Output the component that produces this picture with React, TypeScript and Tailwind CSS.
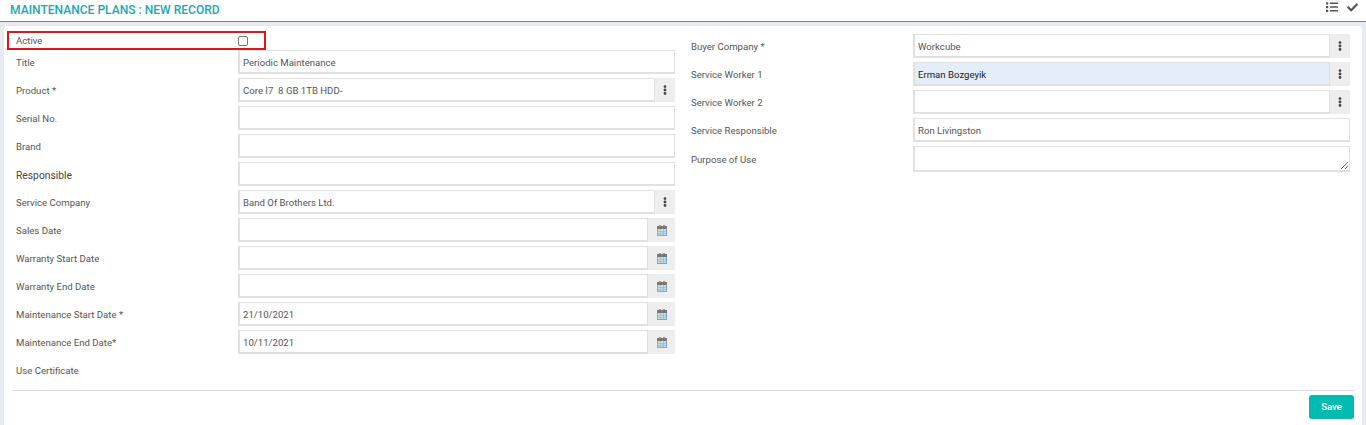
import { FaCheck, FaEllipsisV, FaList } from 'react-icons/fa'

type Addon = 'menu' | 'date' | undefined

interface FieldProps {
  label: string
  value?: string
  addon?: Addon
  highlight?: boolean
  labelClass?: string
}

function CalendarIcon() {
  return (
    <svg width="10" height="11" viewBox="0 0 10 11">
      <rect x="2" y="0" width="2" height="2" fill="#9a9a9a" />
      <rect x="6" y="0" width="2" height="2" fill="#9a9a9a" />
      <rect x="0" y="1" width="10" height="3" fill="#7d7672" />
      <rect x="0" y="4" width="10" height="7" fill="#c5e0e4" />
      <path d="M0 6.5h10M0 8.5h10M3.5 4v7M6.5 4v7" stroke="#a3b4ba" strokeWidth="0.7" />
      <rect x="0" y="4" width="1" height="7" fill="#b3a294" />
      <rect x="9" y="4" width="1" height="7" fill="#6aa9d6" />
      <rect x="0" y="10" width="10" height="1" fill="#9aa1a8" />
    </svg>
  )
}

function Field({ label, value = '', addon, highlight, labelClass }: FieldProps) {
  return (
    <div className="flex h-[28px] items-center">
      <label className={`w-[226px] shrink-0 pl-1 pt-[2px] ${labelClass ?? 'text-[9.6px] text-[#555]'}`}>{label}</label>
      <div className="flex h-[24px] flex-1">
        <div
          className={`flex min-w-0 flex-1 items-center whitespace-pre border-b-2 border-l-2 border-r border-t border-[#e0e0e0] px-[3px] pt-[3px] text-[9.6px] ${
            highlight ? 'bg-[#e3eefa] text-[#222]' : 'bg-white text-[#555]'
          }`}
        >
          {value}
        </div>
        {addon === 'menu' && (
          <div className="flex w-[20px] items-center justify-center bg-[#eeeeee] text-[#444]">
            <FaEllipsisV size={10} />
          </div>
        )}
        {addon === 'date' && (
          <div className="flex w-[27px] items-center justify-center bg-[#eeeeee]">
            <CalendarIcon />
          </div>
        )}
      </div>
    </div>
  )
}

export default function App() {
  return (
    <div className="h-[425px] overflow-hidden bg-[#e9ebf2] font-['Roboto',sans-serif]">
      {/* Header */}
      <div className="flex h-[22px] items-center justify-between border-b border-[#2aa89c] bg-white pl-[10px] pr-[8px]">
        <h1 className="text-[12.06px] font-medium text-[#17a9b5]">MAINTENANCE PLANS : NEW RECORD</h1>
        <div className="-mt-[7px] flex items-center gap-[9px] text-[#555]">
          <FaList size={12} />
          <FaCheck size={11} />
        </div>
      </div>

      {/* Card */}
      <div className="mx-[4px] mt-[4px] h-[399px] rounded-t-[3px] bg-white pl-[8px] pr-[8px]">
        <div className="flex gap-[16px] pr-[4px]">
          <div className="w-[663px]">
            <div className="-ml-[5px] mb-[-2px] mt-[5px] flex h-[19px] w-[259px] items-center border-2 border-[#e0141e]">
              <span className="w-[229px] shrink-0 pl-[7px] pt-[2px] text-[9.6px] text-[#555]">Active</span>
              <input type="checkbox" className="h-[10px] w-[10px] appearance-none rounded-[2px] border border-[#767676] bg-white" />
            </div>
            <Field label="Title" value="Periodic Maintenance" />
            <Field label="Product *" value="Core İ7  8 GB 1TB HDD-" addon="menu" />
            <Field label="Serial No." />
            <Field label="Brand" />
            <Field label="Responsible" labelClass="mt-[2px] text-[10.3px] text-[#444]" />
            <Field label="Service Company" value="Band Of Brothers Ltd." addon="menu" />
            <Field label="Sales Date" addon="date" />
            <Field label="Warranty Start Date" addon="date" />
            <Field label="Warranty End Date" addon="date" />
            <Field label="Maintenance Start Date *" value="21/10/2021" addon="date" />
            <Field label="Maintenance End Date*" value="10/11/2021" addon="date" />
            <div className="flex h-[28px] items-center pl-1 pt-[2px] text-[9.6px] text-[#555]">Use Certificate</div>
          </div>

          <div className="mt-[6px] flex-1">
            <Field label="Buyer Company *" value="Workcube" addon="menu" labelClass="-ml-1 text-[9.6px] text-[#555]" />
            <Field label="Service Worker 1" value="Erman Bozgeyik" addon="menu" highlight labelClass="-ml-1 text-[9.6px] text-[#555]" />
            <Field label="Service Worker 2" addon="menu" labelClass="-ml-1 text-[9.6px] text-[#555]" />
            <Field label="Service Responsible" value="Ron Livingston" labelClass="-ml-1 text-[9.6px] text-[#555]" />
            <div className="mt-[2px] flex">
              <label className="mt-[7px] w-[222px] shrink-0 text-[9.6px] text-[#555]">Purpose of Use</label>
              <textarea className="h-[26px] flex-1 border-b-2 border-l-2 border-r border-t border-[#e0e0e0] outline-none" />
            </div>
          </div>
        </div>

        {/* Footer */}
        <div className="mt-[6px] flex justify-end border-t border-[#dddddd] pt-[4px]">
          <button className="h-[24px] w-[45px] rounded-[3px] bg-[#00bcb0] pt-[1px] text-[9.6px] font-medium text-white">Save</button>
        </div>
      </div>
    </div>
  )
}
